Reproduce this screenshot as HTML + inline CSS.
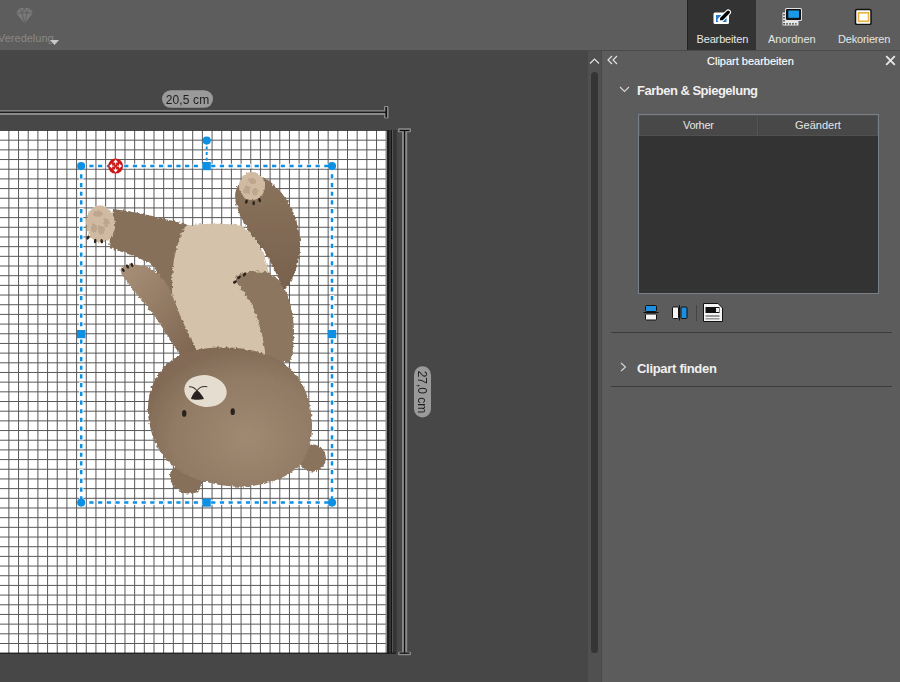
<!DOCTYPE html>
<html><head><meta charset="utf-8">
<style>
*{margin:0;padding:0;box-sizing:border-box}
html,body{width:900px;height:682px;overflow:hidden;background:#474747;font-family:"Liberation Sans",sans-serif;position:relative}
.a{position:absolute}
.topbar{left:0;top:0;width:900px;height:50px;background:#5d5d5d}
.topline{left:0;top:50px;width:900px;height:1px;background:#4a4a4a}
.lbl{font-size:11px;color:#e6e6e6;white-space:nowrap}
.panel{left:602px;top:51px;width:298px;height:631px;background:#5c5c5c}
.scrollcol{left:588px;top:51px;width:13px;height:631px;background:#505050}
.pline{left:601px;top:51px;width:1px;height:631px;background:#4a4a4a}
.thumb{left:590.8px;top:72px;width:7.5px;height:581px;background:#353535;border-radius:4px}
.sep{left:611px;width:281px;height:1px;background:#3c3c3c}
.bold{font-weight:bold;font-size:13px;color:#f0f0f0;white-space:nowrap}
</style></head><body>
<div class="a topbar"></div>
<div class="a topline"></div>

<!-- Veredelung -->
<svg class="a" style="left:15px;top:7px" width="19" height="18" viewBox="0 0 19 18">
 <path d="M4.5 1H14.5L18 6L9.5 16.5L1 6Z" fill="#7a7a7a"/>
 <path d="M1 6H18M4.5 1L7 6L9.5 1L12 6L14.5 1M7 6L9.5 16M12 6L9.5 16" stroke="#5d5d5d" stroke-width="0.9" fill="none"/>
</svg>
<div class="a" style="left:-2px;top:31.5px;font-size:11px;color:#888;letter-spacing:0px">Veredelung</div>
<svg class="a" style="left:50px;top:40px" width="9" height="5"><path d="M0 0H9L4.5 5Z" fill="#c8c8c8"/></svg>

<!-- tabs -->
<div class="a" style="left:687px;top:0;width:69px;height:50px;background:#333;border-left:1px solid #222"></div>
<svg class="a" style="left:711px;top:8px" width="22" height="18" viewBox="0 0 22 18">
 <rect x="2.5" y="4.5" width="15.5" height="11.5" fill="#fff" rx="1.5"/>
 <rect x="5" y="7" width="10.5" height="7" fill="#2a78cc"/>
 <path d="M9.5 12L17.2 4.3" stroke="#fff" stroke-width="5.6" stroke-linecap="round"/>
 <path d="M11 10.4L17.2 4.3" stroke="#000" stroke-width="3.5" stroke-linecap="round"/>
 <path d="M8.8 12.6L9.6 9.4L12.2 11.6Z" fill="#000"/>
</svg>
<div class="a lbl" style="left:696.5px;top:32.5px;letter-spacing:-0.15px">Bearbeiten</div>

<svg class="a" style="left:781px;top:7px" width="22" height="20" viewBox="0 0 22 20">
 <rect x="1.5" y="5.5" width="16" height="13" fill="#e6e6e6"/>
 <path d="M3 7V16.8H15.5" stroke="#222" stroke-width="1.3" fill="none" stroke-dasharray="1.6 1.4"/>
 <rect x="4" y="1" width="17" height="13" fill="#e0e0e0" rx="1.5"/>
 <rect x="5" y="2" width="15" height="11" fill="#111" rx="1"/>
 <rect x="7.3" y="3.5" width="10.7" height="7.3" fill="#1a98e6"/>
</svg>
<div class="a lbl" style="left:768px;top:32.5px">Anordnen</div>

<svg class="a" style="left:854px;top:8px" width="19" height="17" viewBox="0 0 19 17">
 <rect x="1.5" y="1.5" width="15.5" height="15" fill="#fff" stroke="#111" stroke-width="1.5" rx="1.5"/>
 <rect x="4.5" y="4.8" width="10" height="8.5" fill="#fff" stroke="#e9b440" stroke-width="1.6"/>
</svg>
<div class="a lbl" style="left:838px;top:32.5px;letter-spacing:-0.15px">Dekorieren</div>

<!-- canvas -->
<svg class="a" style="left:0;top:0" width="588" height="682">
 <rect x="-12" y="130.5" width="398" height="522.5" fill="#fff"/>
  <path d="M376.52 130V653M366.85 130V653M357.18 130V653M347.50 130V653M337.82 130V653M328.15 130V653M318.47 130V653M308.80 130V653M299.12 130V653M289.45 130V653M279.77 130V653M270.10 130V653M260.42 130V653M250.75 130V653M241.07 130V653M231.40 130V653M221.72 130V653M212.05 130V653M202.37 130V653M192.70 130V653M183.02 130V653M173.35 130V653M163.67 130V653M154.00 130V653M144.32 130V653M134.65 130V653M124.97 130V653M115.30 130V653M105.62 130V653M95.95 130V653M86.27 130V653M76.60 130V653M66.92 130V653M57.25 130V653M47.57 130V653M37.90 130V653M28.22 130V653M18.55 130V653M8.87 130V653M-0.80 130V653M-12 140.18H386M-12 149.86H386M-12 159.54H386M-12 169.22H386M-12 178.90H386M-12 188.57H386M-12 198.25H386M-12 207.93H386M-12 217.61H386M-12 227.29H386M-12 236.97H386M-12 246.65H386M-12 256.33H386M-12 266.01H386M-12 275.69H386M-12 285.36H386M-12 295.04H386M-12 304.72H386M-12 314.40H386M-12 324.08H386M-12 333.76H386M-12 343.44H386M-12 353.12H386M-12 362.80H386M-12 372.48H386M-12 382.15H386M-12 391.83H386M-12 401.51H386M-12 411.19H386M-12 420.87H386M-12 430.55H386M-12 440.23H386M-12 449.91H386M-12 459.59H386M-12 469.26H386M-12 478.94H386M-12 488.62H386M-12 498.30H386M-12 507.98H386M-12 517.66H386M-12 527.34H386M-12 537.02H386M-12 546.70H386M-12 556.38H386M-12 566.06H386M-12 575.73H386M-12 585.41H386M-12 595.09H386M-12 604.77H386M-12 614.45H386M-12 624.13H386M-12 633.81H386M-12 643.49H386" stroke="#585858" stroke-width="1" fill="none"/>
 <g id="bear" filter="url(#soft)">
 <defs><filter id="soft" x="-10%" y="-10%" width="120%" height="120%"><feTurbulence type="fractalNoise" baseFrequency="0.35" numOctaves="2" seed="3" result="n"/><feDisplacementMap in="SourceGraphic" in2="n" scale="4" xChannelSelector="R" yChannelSelector="G" result="d"/><feGaussianBlur in="d" stdDeviation="0.6"/></filter>
 <linearGradient id="armL" x1="0" y1="0" x2="1" y2="1"><stop offset="0" stop-color="#a89078"/><stop offset="1" stop-color="#7a624e"/></linearGradient>
 <radialGradient id="headG" cx="0.6" cy="0.65" r="0.65"><stop offset="0" stop-color="#a08a72"/><stop offset="0.7" stop-color="#917a64"/><stop offset="1" stop-color="#826b56"/></radialGradient>
 <linearGradient id="legR" x1="0" y1="0" x2="0" y2="1"><stop offset="0" stop-color="#8a735c"/><stop offset="1" stop-color="#78614d"/></linearGradient>
 </defs>
  <path d="M113 209C130 211 160 217 188 225L198 232L186 300L166 292C160 276 155 267 150 263C135 256 120 251 109 248Z" fill="#86705a"/>
 <path d="M186 226C200 223 230 223 242 226C255 235 265 252 268 270L278 300L272 358L194 358C184 345 173 315 172 290C172 265 175 243 186 226Z" fill="#d5c2aa"/>
 <ellipse cx="100.6" cy="224" rx="14.5" ry="18.5" transform="rotate(-5 100.6 224)" fill="#d0bba2"/>
 <g fill="#bea58d"><ellipse cx="94" cy="228" rx="3" ry="5"/><ellipse cx="101" cy="230" rx="3" ry="5"/><ellipse cx="106" cy="222" rx="3" ry="4"/><ellipse cx="98" cy="214" rx="5" ry="3"/></g>
 <path d="M121 268C126 263 140 264 150 268C159 273 167 283 171 292C176 305 183 324 193 342L199 356L184 362C176 348 166 333 156 318C146 304 134 292 124 278C121 274 120 271 121 268Z" fill="url(#armL)"/>
 <path d="M235 196C236 178 255 170 268 180C284 192 298 212 300 240C301 262 294 278 284 291C280 282 274 266 262 248C250 234 236 214 235 196Z" fill="url(#legR)"/>
 <ellipse cx="252" cy="186" rx="13" ry="14" fill="#d0bba2"/>
 <g fill="#bea58d"><ellipse cx="247" cy="190" rx="3" ry="4"/><ellipse cx="255" cy="192" rx="3" ry="3.5"/><ellipse cx="252" cy="181" rx="4" ry="3"/></g>
 <path d="M235 277C244 271 262 270 271 274C284 281 293 302 294 330C294 345 292 356 290 362L266 362C265 345 261 326 253 307C247 296 239 288 235 277Z" fill="#8d765f"/>
 <ellipse cx="186" cy="479.6" rx="17" ry="13" transform="rotate(30 186 479.6)" fill="#86705a"/>
 <circle cx="312.5" cy="458" r="13.5" fill="#8a735d"/>
 <path d="M210 348C222.5 346.7 237.5 347.3 250 350C262.5 352.7 275.8 357.3 285 364C294.2 370.7 300.5 379.8 305 390C309.5 400.2 311.8 414.2 312 425C312.2 435.8 310.2 446.7 306 455C301.8 463.3 296.0 469.8 287 475C278.0 480.2 264.0 484.5 252 486C240.0 487.5 227.0 486.5 215 484C203.0 481.5 189.7 477.3 180 471C170.3 464.7 162.3 455.8 157 446C151.7 436.2 148.5 422.7 148 412C147.5 401.3 149.5 391.0 154 382C158.5 373.0 165.7 363.7 175 358C184.3 352.3 197.5 349.3 210 348Z" fill="url(#headG)"/>
</g>
<g filter="url(#soft2)">
 <defs><filter id="soft2" x="-20%" y="-20%" width="140%" height="140%"><feGaussianBlur stdDeviation="0.75"/></filter></defs>
 <ellipse cx="205.5" cy="391" rx="21.3" ry="15.8" transform="rotate(8 205.5 391)" fill="#e6ddd1"/>
 <path d="M197 390.5C199 391 202 395 204 399C200 400 194 400 191 399C192 395 195 391 197 390.5Z" fill="#2a2420"/>
 <path d="M189 386.8Q194 386.5 197 391M197 391Q200 385.5 207.3 386.8" stroke="#3a302a" stroke-width="1.1" fill="none"/>
 <g fill="#2a2420">
  <ellipse cx="88" cy="237.6" rx="1.3" ry="2.2" transform="rotate(30 88 237.6)"/><ellipse cx="95.2" cy="241" rx="1.3" ry="2.2" transform="rotate(10 95.2 241)"/><ellipse cx="101.7" cy="241.2" rx="1.3" ry="2.2" transform="rotate(-10 101.7 241.2)"/>
  <ellipse cx="246.4" cy="201.7" rx="1.3" ry="2.2" transform="rotate(15 246.4 201.7)"/><ellipse cx="253.7" cy="203.1" rx="1.3" ry="2.2"/><ellipse cx="259.6" cy="200.2" rx="1.3" ry="2.2" transform="rotate(-15 259.6 200.2)"/>
  <ellipse cx="235" cy="282" rx="1.3" ry="2.2" transform="rotate(60 235 282)"/><ellipse cx="239" cy="277.5" rx="1.3" ry="2.2" transform="rotate(50 239 277.5)"/><ellipse cx="244.5" cy="274.5" rx="1.3" ry="2.2" transform="rotate(30 244.5 274.5)"/>
  <ellipse cx="123" cy="270" rx="1.3" ry="2.2" transform="rotate(-40 123 270)"/><ellipse cx="127.5" cy="266.5" rx="1.3" ry="2.2" transform="rotate(-30 127.5 266.5)"/><ellipse cx="132" cy="265" rx="1.3" ry="2.2" transform="rotate(-20 132 265)"/>
 </g>
 <ellipse cx="184.2" cy="413.4" rx="2.2" ry="3.4" fill="#2a2420"/>
 <ellipse cx="232.7" cy="411.7" rx="2.2" ry="3.4" fill="#2a2420"/>
</g>
 <rect x="385.5" y="130" width="1.7" height="523" fill="#8a8a8a"/>
 <rect x="387.2" y="130" width="9.5" height="523" fill="#353535"/>
 <rect x="387.5" y="130" width="1.2" height="523" fill="#111"/>
 <rect x="391" y="130" width="1" height="523" fill="#151515"/>
 <rect x="392" y="130" width="1" height="523" fill="#555"/>
 <rect x="-12" y="130" width="399" height="0.8" fill="#333"/>
 <rect x="-12" y="652.6" width="408" height="1.1" fill="#151515"/>
 <!-- h ruler -->
 <rect x="-5" y="110.2" width="391" height="4.8" fill="#8a8a8a"/>
 <rect x="384" y="106" width="4.5" height="12.5" fill="#8a8a8a" rx="1"/>
 <rect x="-5" y="111.6" width="391" height="1.3" fill="#111"/>
 <rect x="385.4" y="107" width="1.6" height="10.5" fill="#111"/>
 <rect x="162" y="90.3" width="51" height="17.4" rx="8.7" fill="#9a9a9a"/>
 <text x="187.5" y="104" font-size="12" text-anchor="middle" fill="#1e1e1e" font-family="Liberation Sans" letter-spacing="0.15">20,5 cm</text>
 <!-- v ruler -->
 <rect x="402" y="130" width="5.2" height="523" fill="#8a8a8a"/>
 <rect x="398" y="128.3" width="13" height="4" fill="#8a8a8a" rx="1"/>
 <rect x="398" y="651.7" width="13" height="3.6" fill="#8a8a8a" rx="1"/>
 <rect x="403.9" y="130" width="1.3" height="523" fill="#111"/>
 <rect x="399.5" y="129.8" width="10" height="1.3" fill="#111"/>
 <rect x="399.5" y="652.5" width="10" height="1.3" fill="#111"/>
 <rect x="414" y="366.3" width="17" height="51.3" rx="8.5" fill="#9a9a9a"/>
 <text x="0" y="0" font-size="12" text-anchor="middle" fill="#1e1e1e" font-family="Liberation Sans" transform="translate(417.5 392) rotate(90)">27,0 cm</text>
 <!-- selection -->
 <g id="sel">
 <path d="M81.2 166.1H332M81.2 502.6H332M81.2 166.1V502.6M332 166.1V502.6" stroke="#fff" stroke-width="4.6" stroke-dasharray="6.2 2.5" stroke-dashoffset="1.55" opacity="0.85"/>
 <path d="M81.2 166.1H332M81.2 502.6H332M81.2 166.1V502.6M332 166.1V502.6" stroke="#0d8fe3" stroke-width="2.5" stroke-dasharray="4.2 4.5" stroke-dashoffset="0.55"/>
 <path d="M206.7 144.7V162" stroke="#0d8fe3" stroke-width="1.9" stroke-dasharray="2.8 2.8" stroke-dashoffset="3.8"/>
 <g fill="#0d8fe3">
  <circle cx="81.2" cy="166.1" r="4.1"/><circle cx="332" cy="166.1" r="4.1"/>
  <circle cx="81.2" cy="502.6" r="4.1"/><circle cx="332" cy="502.6" r="4.1"/>
  <circle cx="206.7" cy="140.6" r="4.1"/>
  <rect x="202.4" y="162" width="8.4" height="8.2"/><rect x="202.4" y="498.5" width="8.4" height="8.2"/>
  <rect x="77" y="330" width="8.4" height="8.2"/><rect x="327.8" y="330" width="8.4" height="8.2"/>
 </g>
 <circle cx="115.6" cy="166.1" r="7.5" fill="#c91a1a"/>
 <g fill="#fff">
  <path d="M115.6 159.6L118.1 162.6H113.1Z"/><path d="M115.6 172.6L118.1 169.6H113.1Z"/>
  <path d="M109.1 166.1L112.1 163.6V168.6Z"/><path d="M122.1 166.1L119.1 163.6V168.6Z"/>
 </g>
 <path d="M115.6 162V170.2M111.5 166.1H119.7" stroke="#fff" stroke-width="0.9"/>
 <circle cx="115.6" cy="166.1" r="1.6" fill="#c91a1a"/>
</g>
</svg>

<!-- scroll + panel -->
<div class="a scrollcol"></div>
<div class="a pline"></div>
<div class="a thumb"></div>
<svg class="a" style="left:589px;top:57px" width="11" height="8"><path d="M1 6.5L5.5 2L10 6.5" stroke="#e0e0e0" stroke-width="1.2" fill="none"/></svg>
<div class="a panel"></div>
<svg class="a" style="left:606px;top:55px" width="13" height="10"><path d="M6 1L2 5L6 9M11 1L7 5L11 9" stroke="#e0e0e0" stroke-width="1.2" fill="none"/></svg>
<div class="a lbl" style="left:707px;top:55px;color:#fff;-webkit-text-stroke:0.15px #fff">Clipart bearbeiten</div>
<svg class="a" style="left:885px;top:54.5px" width="11" height="11"><path d="M1.2 1.2L9.8 9.8M9.8 1.2L1.2 9.8" stroke="#e6e6e6" stroke-width="1.9"/></svg>

<svg class="a" style="left:619px;top:86px" width="11" height="7"><path d="M1 1L5.5 5.5L10 1" stroke="#d8d8d8" stroke-width="1.1" fill="none"/></svg>
<div class="a bold" style="left:637px;top:83px;letter-spacing:-0.5px">Farben &amp; Spiegelung</div>

<div class="a" style="left:638px;top:114px;width:241px;height:180px;background:#333;border:1px solid #78808a"></div>
<div class="a" style="left:639px;top:115px;width:119px;height:21px;background:#484848;border:1px solid #505050;border-right:1px solid #444"></div>
<div class="a" style="left:757px;top:115px;width:1px;height:21px;background:#555"></div>
<div class="a" style="left:758px;top:115px;width:120px;height:21px;background:#484848;border:1px solid #505050;border-left:1px solid #444"></div>
<div class="a lbl" style="left:683px;top:119px;color:#e6e6e6;letter-spacing:-0.3px">Vorher</div>
<div class="a lbl" style="left:795px;top:119px;color:#e6e6e6">Geändert</div>

<svg class="a" style="left:642px;top:303px" width="84" height="21" viewBox="0 0 84 21">
 <rect x="3.5" y="2.5" width="11" height="6" fill="#1c8fe0" stroke="#111" rx="1"/>
 <path d="M1.5 9.5H16.5" stroke="#111" stroke-width="1"/>
 <rect x="3.5" y="11" width="11" height="6" fill="#f4f4f4" stroke="#111" rx="1"/>
 <rect x="30.5" y="4" width="6" height="11.5" fill="#f4f4f4" stroke="#111" rx="1"/>
 <path d="M37.5 2V17.5" stroke="#111" stroke-width="1"/>
 <rect x="39" y="4" width="6" height="11.5" fill="#1c8fe0" stroke="#111" rx="1"/>
 <path d="M54.5 2V18" stroke="#444" stroke-width="1"/>
 <path d="M61.5 0.5H76L80.5 5V18.5H61.5Z" fill="#f4f4f4" stroke="#111" stroke-width="1"/>
 <rect x="63.5" y="4" width="14" height="6" fill="#111"/>
 <rect x="74" y="5" width="3" height="4" fill="#eee"/>
 <rect x="63.5" y="12" width="14" height="2" fill="#999"/>
 <rect x="63.5" y="15" width="14" height="1.5" fill="#999"/>
</svg>

<div class="a sep" style="top:332px"></div>
<svg class="a" style="left:620px;top:362px" width="7" height="10"><path d="M1 1L5.5 5L1 9" stroke="#d8d8d8" stroke-width="1.1" fill="none"/></svg>
<div class="a bold" style="left:637px;top:361px;letter-spacing:-0.3px">Clipart finden</div>
<div class="a sep" style="top:386px"></div>
</body></html>
